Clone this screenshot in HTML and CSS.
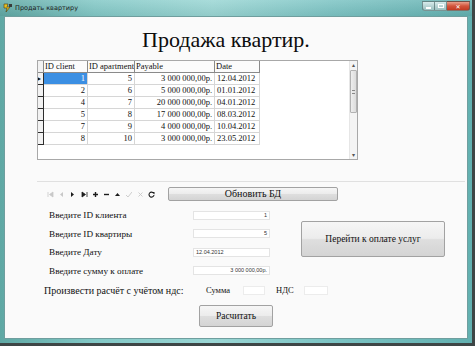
FILE: index.html
```html
<!DOCTYPE html>
<html lang="ru">
<head>
    <meta charset="UTF-8">
    <title>Продать квартиру</title>
    <link rel="stylesheet" href="styles.css">
</head>
<body>
  <div class="window">
    <div class="titlebar">
      <svg class="app-icon" width="10" height="10" viewBox="0 0 10 10">
        <path d="M1 1h4l-1 3h3l-4 5 1-4H1z" fill="#e8c020" stroke="#4a3a10" stroke-width="0.6"/>
        <path d="M6 1h3v3H6z" fill="#3a3a3a"/>
      </svg>
      <span class="caption">Продать квартиру</span>
      <div class="controls">
        <span class="ctl ctl-min"><i></i></span>
        <span class="ctl ctl-max"><i></i></span>
        <span class="ctl ctl-close">✕</span>
      </div>
    </div>

    <div class="client">
      <h1>Продажа квартир.</h1>

      <div class="grid">
        <div class="table">
          <div class="rh head"></div>
          <div class="th">ID client</div>
          <div class="th">ID apartment</div>
          <div class="th">Payable</div>
          <div class="th">Date</div>

          <div class="rh current">▸</div>
          <div class="td selected">1</div>
          <div class="td">5</div>
          <div class="td">3 000 000,00р.</div>
          <div class="td date">12.04.2012</div>

          <div class="rh"></div>
          <div class="td">2</div>
          <div class="td">6</div>
          <div class="td">5 000 000,00р.</div>
          <div class="td date">01.01.2012</div>

          <div class="rh"></div>
          <div class="td">4</div>
          <div class="td">7</div>
          <div class="td">20 000 000,00р.</div>
          <div class="td date">04.01.2012</div>

          <div class="rh"></div>
          <div class="td">5</div>
          <div class="td">8</div>
          <div class="td">17 000 000,00р.</div>
          <div class="td date">08.03.2012</div>

          <div class="rh"></div>
          <div class="td">7</div>
          <div class="td">9</div>
          <div class="td">4 000 000,00р.</div>
          <div class="td date">10.04.2012</div>

          <div class="rh"></div>
          <div class="td">8</div>
          <div class="td">10</div>
          <div class="td">3 000 000,00р.</div>
          <div class="td date">23.05.2012</div>
        </div>

        <div class="vscroll">
          <span class="arrow">▴</span>
          <div class="track">
            <div class="thumb"><i></i></div>
          </div>
          <span class="arrow">▾</span>
        </div>
      </div>

      <div class="separator"></div>

      <div class="toolbar">
        <div class="navigator">
          <svg class="nav off" viewBox="0 0 7 7"><path d="M1 1v5M6 1L2.5 3.5 6 6z" stroke="currentColor" fill="currentColor" stroke-width="0.8"/></svg>
          <svg class="nav off" viewBox="0 0 7 7"><path d="M5 1L2 3.5 5 6z" fill="currentColor"/></svg>
          <svg class="nav" viewBox="0 0 7 7"><path d="M2 1l3 2.5L2 6z" fill="currentColor"/></svg>
          <svg class="nav" viewBox="0 0 7 7"><path d="M1 1l3.5 2.5L1 6zM6 1v5" stroke="currentColor" fill="currentColor" stroke-width="0.8"/></svg>
          <svg class="nav" viewBox="0 0 7 7"><path d="M3.5 1v5M1 3.5h5" stroke="currentColor" stroke-width="1.4"/></svg>
          <svg class="nav" viewBox="0 0 7 7"><path d="M1 3.5h5" stroke="currentColor" stroke-width="1.4"/></svg>
          <svg class="nav" viewBox="0 0 7 7"><path d="M1 5l2.5-3L6 5z" fill="currentColor"/></svg>
          <svg class="nav off" viewBox="0 0 7 7"><path d="M1 4l2 2 4-5" stroke="currentColor" fill="none" stroke-width="0.9"/></svg>
          <svg class="nav off" viewBox="0 0 7 7"><path d="M1.5 1.5l4 4M5.5 1.5l-4 4" stroke="currentColor" stroke-width="0.9"/></svg>
          <svg class="nav" viewBox="0 0 7 7"><path d="M5.6 2.2A2.5 2.5 0 1 0 6 4" stroke="currentColor" fill="none" stroke-width="1.1"/><path d="M4 1h2.5v2.5z" fill="currentColor"/></svg>
        </div>
        <button class="btn btn-refresh">Обновить БД</button>
      </div>

      <div class="form">
        <div class="fields">
          <div class="field">
            <label>Введите ID клиента</label>
            <span class="input right">1</span>
          </div>
          <div class="field">
            <label>Введите ID квартиры</label>
            <span class="input right">5</span>
          </div>
          <div class="field">
            <label>Введите Дату</label>
            <span class="input">12.04.2012</span>
          </div>
          <div class="field">
            <label>Введите сумму к оплате</label>
            <span class="input right">3 000 000,00р.</span>
          </div>
        </div>
        <button class="btn btn-pay">Перейти к оплате услуг</button>
      </div>

      <div class="vat">
        <span class="vat-title">Произвести расчёт с учётом ндс:</span>
        <span class="vat-label">Сумма</span>
        <span class="input small"></span>
        <span class="vat-label vat-nds">НДС</span>
        <span class="input small wide"></span>
      </div>

      <div class="calc">
        <button class="btn btn-calc">Расчитать</button>
      </div>
    </div>
  </div>
</body>
</html>
```

FILE: styles.css
```css
* {
    margin: 0;
    padding: 0;
    box-sizing: border-box;
}

body {
    width: 475px;
    height: 346px;
    overflow: hidden;
    background: #3e4646;
    font-family: "Liberation Serif", "Times New Roman", serif;
    color: #111;
}

/* Window frame */
.window {
    width: 472px;
    height: 343px;
    display: flex;
    flex-direction: column;
    background: linear-gradient(90deg, #5fa8a4 0%, #82c8c6 20%, #9ad6d4 45%, #7cc4c4 70%, #62b0b0 100%);
    padding: 0 4px 4px 4px;
}

.titlebar {
    height: 16px;
    display: flex;
    align-items: center;
    gap: 2px;
    background: linear-gradient(180deg, rgba(255,255,255,0.15), rgba(0,0,0,0.05));
    margin: 0 -4px;
    padding: 0 2px 0 3px;
}

.app-icon {
    flex: none;
}

.caption {
    font-family: "DejaVu Sans", sans-serif;
    font-size: 6.5px;
    color: #1a1a1a;
}

.controls {
    margin-left: auto;
    display: flex;
    align-self: flex-start;
    margin-top: 1px;
}

.ctl {
    height: 10px;
    display: flex;
    align-items: center;
    justify-content: center;
    border: 1px solid rgba(60, 90, 90, 0.6);
    background: linear-gradient(180deg, #d8ecec 0%, #b8d4d4 50%, #9cc2c2 100%);
}

.ctl-min {
    width: 13px;
    border-radius: 0 0 0 3px;
}

.ctl-min i {
    width: 5px;
    height: 2px;
    margin-top: 3px;
    background: #fff;
}

.ctl-max {
    width: 12px;
    border-left: none;
}

.ctl-max i {
    width: 6px;
    height: 4px;
    border: 1px solid #fff;
}

.ctl-close {
    width: 23px;
    border-left: none;
    border-radius: 0 0 3px 0;
    background: linear-gradient(180deg, #e8a08c 0%, #d2553c 50%, #c23a22 100%);
    color: #fff;
    font-size: 6px;
    font-family: "DejaVu Sans", sans-serif;
    font-weight: bold;
}

/* Client area */
.client {
    flex: 1;
    background: #fafafa;
    border: 1px solid #6f9e9e;
    display: flex;
    flex-direction: column;
}

h1 {
    font-weight: normal;
    font-size: 22px;
    line-height: 28px;
    margin: 9px 0 0 137px;
    color: #0c0c0c;
}

/* Data grid */
.grid {
    margin: 6px 0 0 32px;
    width: 321px;
    height: 100px;
    background: #fff;
    border: 1px solid #a8a8a8;
    display: flex;
    justify-content: space-between;
}

.table {
    display: grid;
    grid-template-columns: 6px 44px 47px 80px 45px;
    grid-auto-rows: 12px;
    align-content: start;
    font-size: 8.5px;
    line-height: 11px;
}

.th, .td, .rh {
    border-right: 1px solid #d6d6d6;
    border-bottom: 1px solid #d6d6d6;
    white-space: nowrap;
    overflow: hidden;
}

.th {
    background: #fbfbfb;
    border-right-color: #8a8a8a;
    border-bottom-color: #8a8a8a;
    padding-left: 1px;
}

.td {
    text-align: right;
    padding-right: 2px;
}

.td.date {
    text-align: left;
    padding: 0 0 0 2px;
}

.td.selected {
    background: #3b8fe3;
    color: #fff;
}

.rh {
    background: #f2f2f2;
    border-right-color: #2e2e2e;
    border-bottom-color: #2e2e2e;
    font-size: 8px;
    line-height: 11px;
    text-indent: -1px;
}

.rh.head {
    border-right-color: #8a8a8a;
    border-bottom-color: #8a8a8a;
}

.vscroll {
    width: 8px;
    display: flex;
    flex-direction: column;
    align-items: center;
    background: #f4f4f4;
    border-left: 1px solid #e6e6e6;
}

.arrow {
    font-size: 6px;
    line-height: 8px;
    color: #555;
}

.track {
    flex: 1;
    width: 100%;
}

.thumb {
    margin-top: 1px;
    height: 43px;
    border: 1px solid #b2b2b2;
    border-radius: 1px;
    background: linear-gradient(90deg, #eeeeee, #dcdcdc);
    display: flex;
    align-items: center;
    justify-content: center;
}

.thumb i {
    width: 3px;
    height: 4px;
    border-top: 1px solid #888;
    border-bottom: 1px solid #888;
}

.separator {
    margin: 21px 0 0 32px;
    width: 428px;
    height: 1px;
    background: #e0e0e0;
}

/* Navigator + refresh */
.toolbar {
    margin: 5px 0 0 42px;
    height: 14px;
    display: flex;
    align-items: center;
}

.navigator {
    width: 121px;
    display: flex;
    align-items: center;
    gap: 4.2px;
}

.nav {
    width: 7px;
    height: 7px;
    color: #1c1c1c;
}

.nav.off {
    color: #c8c8c8;
}

.btn {
    font-family: "Liberation Serif", "Times New Roman", serif;
    font-size: 9.5px;
    color: #111;
    border: 1px solid #a2a2a2;
    border-radius: 2px;
    background: linear-gradient(180deg, #f6f6f6 0%, #ececec 48%, #dedede 52%, #d4d4d4 100%);
}

.btn-refresh {
    width: 170px;
    height: 14px;
    line-height: 12px;
    font-size: 10px;
}

/* Input form */
.form {
    display: flex;
    margin: 5px 0 0 44px;
}

.fields {
    display: flex;
    flex-direction: column;
}

.field {
    height: 18.5px;
    display: flex;
    align-items: center;
}

.field label {
    width: 144px;
    font-size: 9.2px;
}

.input {
    width: 77px;
    height: 9px;
    background: #fff;
    border: 1px solid #e4e4e4;
    font-family: "Liberation Sans", Arial, sans-serif;
    font-size: 5.5px;
    line-height: 7px;
    padding: 0 2px;
    color: #333;
}

.input.right {
    text-align: right;
}

.btn-pay {
    width: 144px;
    height: 36px;
    margin: 15px 0 0 31px;
}

/* VAT line */
.vat {
    display: flex;
    align-items: center;
    margin: 3px 0 0 39px;
    height: 14px;
}

.vat-title {
    font-size: 10px;
    width: 162px;
    white-space: nowrap;
}

.vat-label {
    font-size: 8.5px;
    width: 37px;
}

.vat-nds {
    width: 28px;
    margin-left: 11px;
}

.input.small {
    width: 22px;
    height: 9px;
    border-color: #ececec;
}

.input.wide {
    width: 24px;
}

.calc {
    margin: 8px 0 0 194px;
}

.btn-calc {
    width: 74px;
    height: 22px;
}
```
